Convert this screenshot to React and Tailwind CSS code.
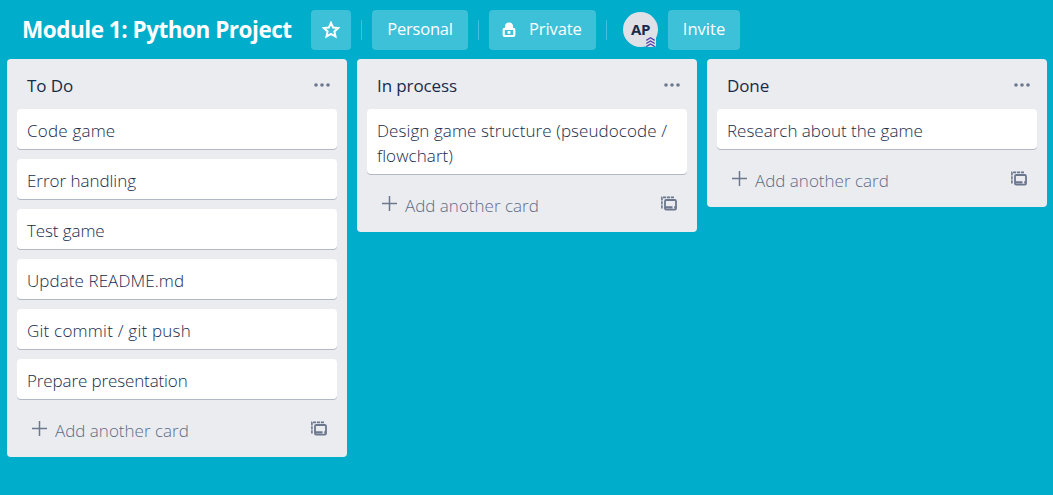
const lists = [
  {
    title: "To Do",
    titleTrack: "tracking-[-0.1px]",
    cards: [
      { text: "Code game", track: "tracking-[0.2px]" },
      { text: "Error handling", track: "tracking-[-0.03px]" },
      { text: "Test game", track: "tracking-[-0.1px]" },
      { text: "Update README.md", track: "tracking-[0.08px]" },
      { text: "Git commit / git push", track: "tracking-[0.22px]" },
      { text: "Prepare presentation", track: "tracking-[-0.12px]" },
    ],
  },
  {
    title: "In process",
    titleTrack: "tracking-[-0.1px]",
    cards: [{ text: "Design game structure (pseudocode / flowchart)", track: "tracking-[0.08px]" }],
  },
  {
    title: "Done",
    titleTrack: "tracking-[-0.1px]",
    cards: [{ text: "Research about the game", track: "tracking-[0px]" }],
  },
];

function TemplateIcon() {
  return (
    <svg className="mt-[2px]" width="16" height="16" viewBox="0 0 16 16" fill="none" stroke="#6b778c">
      <path d="M.9 12.5V1.4H13" strokeWidth="1.6" strokeDasharray="3.2 .8" />
      <rect x="4" y="4" width="11" height="9.6" rx="1.2" strokeWidth="1.8" />
      <path d="M4 11.4h7.5M13.2 11.4H15" strokeWidth="2.4" />
    </svg>
  );
}

function List({ list }) {
  return (
    <section className="w-[340px] shrink-0 rounded-[4px] bg-[#ebecf0] px-[10px]">
      <header className="flex h-[50px] items-center justify-between pl-[10px] pr-[7px] pt-[4px]">
        <h2 className={`text-[17px] font-medium text-[#172b4d] ${list.titleTrack}`}>{list.title}</h2>
        <svg className="mb-[3px]" width="16" height="4" viewBox="0 0 16 4" fill="#6b778c">
          <circle cx="2" cy="2" r="1.8" />
          <circle cx="8" cy="2" r="1.8" />
          <circle cx="14" cy="2" r="1.8" />
        </svg>
      </header>
      <div className="flex flex-col gap-[10px]">
        {list.cards.map((card) => (
          <div
            key={card.text}
            className={`rounded-[4px] bg-white px-[10px] pt-[9px] pb-[6px] text-[17px] font-[350] leading-[25px] text-[#172b4d] shadow-[0_1px_0_#b2b9c5] ${card.track}`}
          >
            {card.text}
          </div>
        ))}
      </div>
      <footer className="flex h-[58px] items-center justify-between pl-[15px] pr-[10px] text-[#5e6c84]">
        <div className="flex items-center">
          <svg width="15" height="15" viewBox="0 0 15 15" fill="none" stroke="#6b778c" strokeWidth="1.5">
            <path d="M7.5 0v15M0 7.5h15" />
          </svg>
          <span className="ml-[8px] mt-[5px] text-[17px] font-[350]">Add another card</span>
        </div>
        <TemplateIcon />
      </footer>
    </section>
  );
}

function Divider() {
  return <div className="h-5 w-px bg-white/25" />;
}

export default function App() {
  return (
    <main className="h-[495px] w-[1053px] overflow-hidden bg-[#00aecc] font-['Open_Sans','Noto_Sans',sans-serif]">
      <nav className="flex h-[59px] items-center pl-[22px] text-white">
        <h1 className="w-[289px] whitespace-nowrap text-[22.5px] font-bold tracking-[-0.48px]">Module 1: Python Project</h1>
        <button className="flex h-10 w-10 items-center justify-center rounded-[4px] bg-white/24">
          <svg width="18" height="18" viewBox="0 0 18 18" fill="none" stroke="white" strokeWidth="2">
            <path d="M9 1.8l2.1 4.7 5.1.5-3.8 3.4 1.1 5L9 12.8l-4.5 2.6 1.1-5L1.8 7l5.1-.5z" />
          </svg>
        </button>
        <div className="mx-[10px]"><Divider /></div>
        <button className="h-10 w-24 rounded-[4px] bg-white/24 text-[16.5px] tracking-[-0.2px]">Personal</button>
        <div className="mx-[10px]"><Divider /></div>
        <button className="flex h-10 w-[107px] items-center rounded-[4px] bg-white/24 pl-[13px] text-[16.5px] tracking-[-0.1px]">
          <svg width="14" height="16" viewBox="0 0 14 16" fill="none">
            <path d="M3 6V4.5a4 4 0 0 1 8 0V6z" fill="white" />
            <rect x="1.7" y="6.8" width="10.6" height="7.2" rx="1" stroke="white" strokeWidth="2.2" />
            <rect x="5.6" y="9" width="2.8" height="2.8" fill="white" />
          </svg>
          <span className="ml-[13px]">Private</span>
        </button>
        <div className="ml-[10px] mr-[16px]"><Divider /></div>
        <div className="relative flex h-[35px] w-[35px] items-center justify-center rounded-full bg-[#dfe1e6] text-[15px] font-bold tracking-[-0.3px] text-[#172b4d]">
          AP
          <svg className="absolute right-[2px] bottom-0" width="11" height="11" viewBox="0 0 11 11" fill="none">
            <rect width="11" height="11" rx="2" fill="#dfe1e6" />
            <path d="M1.3 4.4l4.2-2.6 4.2 2.6M1.3 7.5l4.2-2.6 4.2 2.6M1.3 10.6L5.5 8l4.2 2.6" stroke="#5243aa" strokeWidth="1.3" />
          </svg>
        </div>
        <button className="ml-[10px] h-10 w-[72px] rounded-[4px] bg-white/24 text-[16.5px]">Invite</button>
      </nav>
      <div className="flex items-start gap-[10px] pl-[7px]">
        {lists.map((list) => (
          <List key={list.title} list={list} />
        ))}
      </div>
    </main>
  );
}
